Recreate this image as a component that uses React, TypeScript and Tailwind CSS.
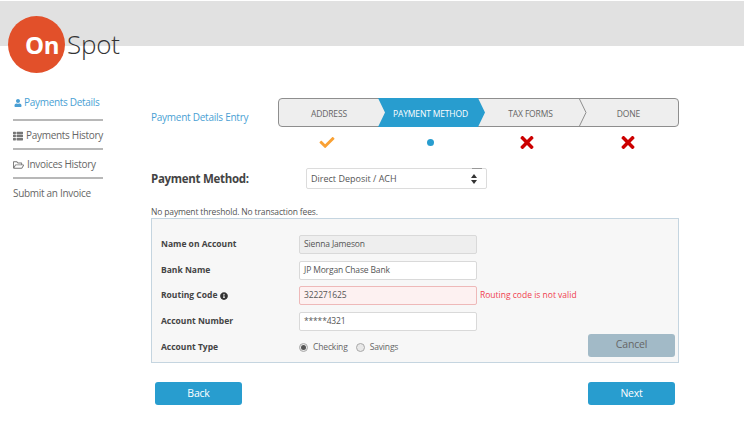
import React from 'react';
import { FaUser, FaThList, FaRegFolderOpen, FaInfoCircle, FaCheck, FaTimes } from 'react-icons/fa';

const font = { fontFamily: '"Open Sans", "Noto Sans", sans-serif' };

const Logo = () => (
  <div className="absolute left-[8px] top-[16px] flex items-center">
    <div className="flex h-[57px] w-[57px] items-center justify-center rounded-full bg-[#e2502a] pl-[11px] text-[24px] font-bold tracking-[-0.5px] text-white">
      On
    </div>
    <span className="ml-[2px] mt-[-1px] text-[26px] font-light leading-none tracking-[-0.2px] text-[#333]">Spot</span>
  </div>
);

const SideLink = ({ children, divider }: { children: React.ReactNode; divider?: boolean }) => (
  <div className={`flex h-[29px] items-center gap-[3px] whitespace-nowrap text-[10px] tracking-[-0.3px] text-[#666] ${divider ? 'border-b-2 border-[#b8b8b8] pt-[2px]' : ''}`}>
    {children}
  </div>
);

const Sidebar = () => (
  <div className="w-[151px] shrink-0 pl-[13px] pt-[43px]">
    <div className="w-[90px]">
      <div className="flex h-[32px] items-center gap-[2px] whitespace-nowrap border-b-2 border-[#b8b8b8] pb-[3px] pl-px text-[10px] tracking-[-0.3px] text-[#4a9fd4]">
        <FaUser className="h-[8px] w-[8px] shrink-0" />
        <span>Payments Details</span>
      </div>
      <SideLink divider>
        <FaThList className="h-[10px] w-[10px] shrink-0 text-[#777]" />
        <span>Payments History</span>
      </SideLink>
      <SideLink divider>
        <FaRegFolderOpen className="h-[10px] w-[11px] shrink-0 text-[#777]" />
        <span>Invoices History</span>
      </SideLink>
      <SideLink>
        <span>Submit an Invoice</span>
      </SideLink>
    </div>
  </div>
);

const Stepper = () => (
  <div className="relative flex h-[29px] w-[401px] rounded-[4px] border border-[#8e8e8e] bg-[#eeeeee] text-[8.5px] tracking-[-0.15px] text-[#666]">
    <svg className="absolute left-[-1px] top-[-1px] h-[29px] w-[401px]" viewBox="0 0 401 29" fill="none">
      <polygon points="100,0 200,0 207,14.5 200,29 100,29 107,14.5" fill="#289dcf" />
      <polyline points="301,0 308,14.5 301,29" stroke="#8e8e8e" strokeWidth="1" />
    </svg>
    <div className="relative flex w-[100px] items-center justify-center pt-[3px]">ADDRESS</div>
    <div className="relative flex w-[100px] items-center justify-center pl-[3px] pt-[3px] text-white">PAYMENT METHOD</div>
    <div className="relative flex w-[100px] items-center justify-center pl-[3px] pt-[3px]">TAX FORMS</div>
    <div className="relative flex w-[99px] items-center justify-center pt-[3px]">DONE</div>
  </div>
);

const StepMarks = () => (
  <div className="mt-[7px] flex h-[16px] w-[401px] items-center">
    <div className="flex w-[98px] justify-center"><FaCheck className="h-[15px] w-[16px] text-[#f9a134]" /></div>
    <div className="flex w-[100px] justify-center pl-[8px]">
      <span className="h-[7px] w-[7px] rounded-full bg-[#289dcf]" />
    </div>
    <div className="flex w-[100px] justify-center pl-[2px]"><FaTimes className="h-[19px] w-[14px] text-[#cc0000]" /></div>
    <div className="flex w-[100px] justify-center pl-[3px]"><FaTimes className="h-[19px] w-[14px] text-[#cc0000]" /></div>
  </div>
);

const Field = ({ label, value, tone, info, error }: { label: string; value: string; tone?: string; info?: boolean; error?: string }) => (
  <div className="flex h-[19px] items-center">
    <div className="flex w-[138px] shrink-0 items-center gap-[3px] text-[8.5px] font-bold text-[#444]">
      {label}
      {info && <FaInfoCircle className="h-[8px] w-[8px] text-[#333]" />}
    </div>
    <div className={`flex h-[19px] w-[178px] shrink-0 items-center rounded-[2px] border pl-[4px] text-[8.5px] tracking-[-0.15px] text-[#555] ${tone ?? 'border-[#d9d9d9] bg-white'}`}>
      {value}
    </div>
    {error && <span className="ml-[3px] whitespace-nowrap text-[8.5px] text-[#f0404f]">{error}</span>}
  </div>
);

const Radio = ({ checked }: { checked?: boolean }) => (
  <span className="flex h-[9px] w-[9px] items-center justify-center rounded-full border border-[#a8a8a8] bg-[#e8e8e8]">
    {checked && <span className="h-[5px] w-[5px] rounded-full bg-[#555]" />}
  </span>
);

const BankPanel = () => (
  <div className="flex h-[145px] w-[528px] flex-col gap-[6.5px] border border-[#c5d5e0] bg-[#f7f7f7] pl-[9px] pr-[3px] pt-[16px]">
    <Field label="Name on Account" value="Sienna Jameson" tone="border-[#d9d9d9] bg-[#eeeeee]" />
    <Field label="Bank Name" value="JP Morgan Chase Bank" />
    <Field label="Routing Code" value="322271625" tone="border-[#eeb9b9] bg-[#fdf1f1]" info error="Routing code is not valid" />
    <Field label="Account Number" value="*****4321" />
    <div className="flex h-[19px] items-center">
      <div className="mt-px w-[138px] shrink-0 text-[8.5px] font-bold text-[#444]">Account Type</div>
      <div className="mt-px flex items-center text-[8.5px] tracking-[-0.15px] text-[#666]">
        <Radio checked />
        <span className="ml-[5px]">Checking</span>
        <span className="ml-[8px]"><Radio /></span>
        <span className="ml-[5px]">Savings</span>
      </div>
      <button className="ml-auto mt-[-3px] h-[23px] w-[87px] shrink-0 rounded-[3px] bg-[#a2bac7] text-[10.5px] tracking-[-0.2px] text-[#666]">Cancel</button>
    </div>
  </div>
);

export default function App() {
  return (
    <div className="relative h-[424px] w-[744px] overflow-hidden bg-white" style={font}>
      <div className="mt-px h-[45px] bg-[#e1e1e1]" />
      <Logo />
      <div className="flex">
        <Sidebar />
        <div className="flex-1">
          <div className="mt-[52px] flex items-start">
            <div className="mt-[12px] w-[127px] whitespace-nowrap text-[10px] tracking-[-0.25px] text-[#4a9fd4]">Payment Details Entry</div>
            <div>
              <Stepper />
              <StepMarks />
            </div>
          </div>
          <div className="mt-[18px] flex h-[21px] items-center">
            <div className="w-[155px] text-[11.5px] font-bold tracking-[-0.3px] text-[#444]">Payment Method:</div>
            <div className="relative flex h-[21px] w-[181px] items-center justify-between rounded-[2px] border border-[#dcdcdc] bg-white pl-[4px] pr-[9px] text-[9px] text-[#555]">
              Direct Deposit / ACH
              <svg className="h-[10px] w-[6px]" viewBox="0 0 6 10" fill="#333">
                <path d="M3 0 6 4H0zM3 10 0 6h6z" />
              </svg>
              <span className="absolute right-[4px] top-[-1px] h-px w-[10px] bg-[#999]" />
            </div>
          </div>
          <div className="mt-[16px] h-[13px] text-[8.5px] leading-[13px] tracking-[-0.15px] text-[#555]">No payment threshold. No transaction fees.</div>
          <BankPanel />
          <div className="mt-[19px] flex w-[524px] justify-between pl-[4px]">
            <button className="h-[23px] w-[87px] rounded-[3px] bg-[#289dcf] text-[10.5px] tracking-[-0.2px] text-white">Back</button>
            <button className="h-[23px] w-[87px] rounded-[3px] bg-[#289dcf] text-[10.5px] tracking-[-0.2px] text-white">Next</button>
          </div>
        </div>
      </div>
    </div>
  );
}
